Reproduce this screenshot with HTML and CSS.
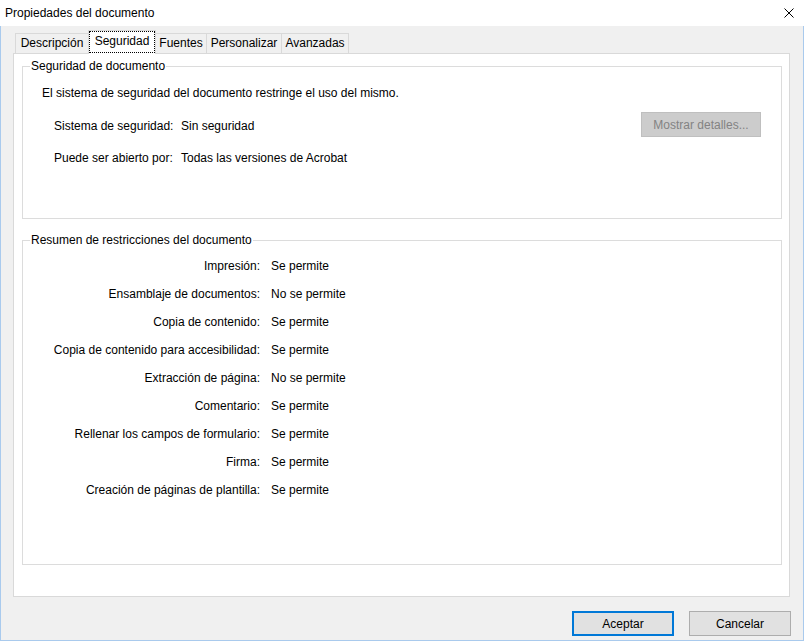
FILE: index.html
```html
<!DOCTYPE html>
<html lang="es">
<head>
<meta charset="utf-8">
<title>Propiedades del documento</title>
<link rel="stylesheet" href="styles.css">
</head>
<body>
<div class="window">
  <div class="titlebar">
    <span class="title">Propiedades del documento</span>
    <svg class="close" width="10" height="10" viewBox="0 0 10 10"><path d="M0.5 0.5 L9.5 9.5 M9.5 0.5 L0.5 9.5" stroke="#000" stroke-width="1" fill="none"/></svg>
  </div>
  <div class="client">
    <div class="tabs">
      <div class="tab t1">Descripción</div>
      <div class="tab sel t2"><span class="focus">Seguridad</span></div>
      <div class="tab t3">Fuentes</div>
      <div class="tab t4">Personalizar</div>
      <div class="tab t5">Avanzadas</div>
    </div>
    <div class="panel">
      <fieldset class="group g1">
        <legend>Seguridad de documento</legend>
        <p class="intro">El sistema de seguridad del documento restringe el uso del mismo.</p>
        <div class="secrow">
          <div class="secgrid">
            <span>Sistema de seguridad:</span><span>Sin seguridad</span>
            <span>Puede ser abierto por:</span><span>Todas las versiones de Acrobat</span>
          </div>
          <button class="btn disabled" disabled>Mostrar detalles...</button>
        </div>
      </fieldset>
      <fieldset class="group g2">
        <legend>Resumen de restricciones del documento</legend>
        <div class="restr">
          <span class="lbl">Impresión:</span><span>Se permite</span>
          <span class="lbl">Ensamblaje de documentos:</span><span>No se permite</span>
          <span class="lbl">Copia de contenido:</span><span>Se permite</span>
          <span class="lbl">Copia de contenido para accesibilidad:</span><span>Se permite</span>
          <span class="lbl">Extracción de página:</span><span>No se permite</span>
          <span class="lbl">Comentario:</span><span>Se permite</span>
          <span class="lbl">Rellenar los campos de formulario:</span><span>Se permite</span>
          <span class="lbl">Firma:</span><span>Se permite</span>
          <span class="lbl">Creación de páginas de plantilla:</span><span>Se permite</span>
        </div>
      </fieldset>
    </div>
    <div class="footer">
      <button class="btn primary">Aceptar</button>
      <button class="btn">Cancelar</button>
    </div>
  </div>
</div>
</body>
</html>
```
FILE: styles.css
```css
html, body {
  margin: 0;
  padding: 0;
}
body {
  width: 804px;
  height: 641px;
  overflow: hidden;
  font: 12px/16px "Liberation Sans", Arial, sans-serif;
  color: #000;
  background: #f0f0f0;
}
.window {
  width: 804px;
  height: 641px;
  display: flex;
  flex-direction: column;
}
.titlebar {
  height: 26px;
  flex: none;
  background: #fff;
  display: flex;
  align-items: center;
  justify-content: space-between;
  padding: 0 10px 0 5px;
}
.title {
  line-height: 16px;
}
.close {
  display: block;
}
.client {
  flex: 1;
  box-sizing: border-box;
  border: 1px solid #a9caed;
  border-top: none;
  background: #f0f0f0;
  padding: 4px 13px 0 12px;
}
.tabs {
  display: flex;
  align-items: flex-end;
  height: 23px;
  padding-left: 2px;
}
.tab {
  box-sizing: border-box;
  height: 20px;
  border: 1px solid #d9d9d9;
  border-bottom: none;
  margin-left: -1px;
  background: #f0f0f0;
  text-align: center;
  line-height: 18px;
  white-space: nowrap;
}
.t1 { width: 74px; margin-left: 0; }
.t2 { width: 68px; }
.t3 { width: 52px; }
.t4 { width: 76px; }
.t5 { width: 68px; }
.tab.sel {
  height: 24px;
  margin-bottom: -1px;
  background: #fff;
  position: relative;
  z-index: 1;
  padding: 0 0 1px 0;
}
.focus {
  display: block;
  box-sizing: border-box;
  height: 22px;
  border: 1px dotted #000;
  line-height: 19px;
}
.panel {
  box-sizing: border-box;
  height: 544px;
  background: #fff;
  border: 1px solid #d9d9d9;
  padding: 4px 7px 0 8px;
}
.group {
  box-sizing: border-box;
  margin: 0;
  padding: 0;
  border: 1px solid #dcdcdc;
  min-width: 0;
}
.group legend {
  margin-left: 7px;
  padding: 0 1px;
  line-height: 16px;
}
.g1 {
  height: 161px;
}
.g2 {
  height: 333px;
  margin-top: 13px;
}
.intro {
  margin: 11px 0 0 19px;
}
.secrow {
  display: flex;
  justify-content: space-between;
  align-items: flex-start;
  margin-top: 17px;
  padding-left: 31px;
  padding-right: 20px;
}
.secgrid {
  display: grid;
  grid-template-columns: 127px auto;
  row-gap: 16px;
}
.btn {
  box-sizing: border-box;
  font: 12px/16px "Liberation Sans", Arial, sans-serif;
  color: #000;
  background: #e1e1e1;
  border: 1px solid #adadad;
  padding: 0;
  margin: 0;
  height: 25px;
  width: 102px;
}
.btn.disabled {
  width: 120px;
  margin-top: -6px;
  background: #cccccc;
  border-color: #bfbfbf;
  color: #838383;
}
.btn.primary {
  border: 2px solid #0078d7;
}
.restr {
  display: grid;
  grid-template-columns: 237px auto;
  column-gap: 11px;
  row-gap: 12px;
  margin-top: 10px;
}
.restr .lbl {
  text-align: right;
  white-space: nowrap;
}
.footer {
  display: flex;
  justify-content: flex-end;
  gap: 15px;
  padding-top: 14px;
  margin-right: -1px;
}
```
